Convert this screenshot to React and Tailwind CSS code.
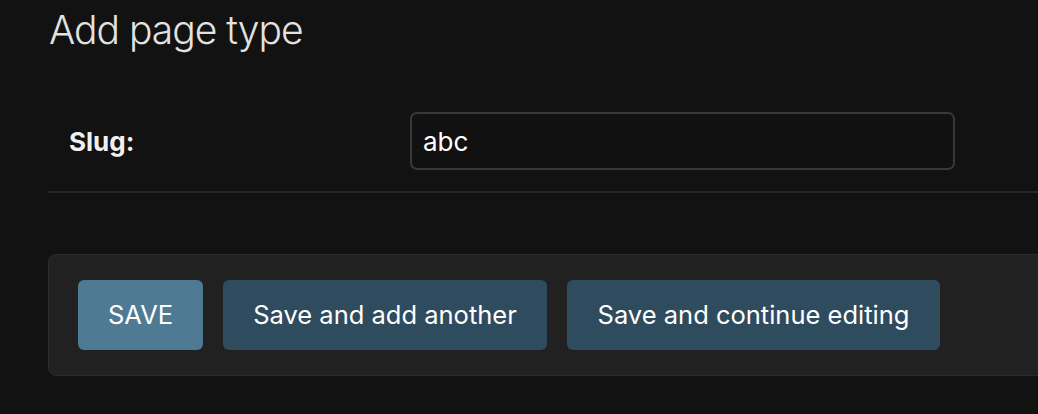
import React from 'react';

const font = { fontFamily: 'Inter, "Liberation Sans", sans-serif' };

const App = () => {
  return (
    <div className="w-[1038px] h-[414px] overflow-hidden bg-[#121212] text-[#eeeeee]" style={font}>
      <div className="w-[1100px] pl-[48px] pt-[6px]">
        <h1 className="pl-[1px] text-[39px] leading-[47px] tracking-[-1px] font-light text-[#e2e2e2]">Add page type</h1>

        <div className="mt-[38px] flex items-center border-b-2 border-[#272727] py-[21px]">
          <label className="w-[362px] pl-[21px] text-[26px] font-bold text-[#f0f0f0]">Slug:</label>
          <input
            defaultValue="abc"
            className="w-[545px] h-[58px] rounded-[7px] border-2 border-[#383838] bg-[#111111] px-[11px] text-[26px] text-white outline-none"
          />
        </div>

        <div className="mt-[61px] flex gap-[20px] rounded-[8px] border border-[#2b2b2b] bg-[#212121] pl-[29px] py-[25px]">
          <button className="w-[125px] h-[70px] rounded-[6px] bg-[#4e7a93] text-[25.5px] text-white">SAVE</button>
          <button className="w-[324px] h-[70px] rounded-[6px] bg-[#2f4b5e] text-[25.5px] text-white">Save and add another</button>
          <button className="w-[373px] h-[70px] rounded-[6px] bg-[#2f4b5e] text-[25.5px] text-white">Save and continue editing</button>
        </div>
      </div>
    </div>
  );
};

export default App;
